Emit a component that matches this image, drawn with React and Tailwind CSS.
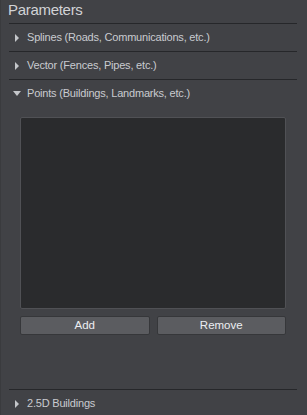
const Arrow = ({ open }) =>
  open ? (
    <svg width="8" height="5" viewBox="0 0 8 5" className="mr-[6px] ml-[4px]">
      <path d="M0 0 L8 0 L4 5 Z" fill="#c4c6ca" />
    </svg>
  ) : (
    <svg width="4" height="8" viewBox="0 0 4 8" className="mr-[8px] ml-[6px]">
      <path d="M0 0 L4 4 L0 8 Z" fill="#c4c6ca" />
    </svg>
  );

const Row = ({ label, open }) => (
  <div className="flex items-center h-[27px] text-[11px] tracking-[-0.2px] text-[#c9cbd0]">
    <Arrow open={open} />
    <span>{label}</span>
  </div>
);

const App = () => {
  return (
    <div
      className="w-[307px] h-[415px] bg-[#414246] border-l border-[#3a3b3e] flex flex-col overflow-hidden"
      style={{ fontFamily: '"Liberation Sans", Arial, sans-serif' }}
    >
      <div className="h-[23px] pl-[7px] text-[15px] tracking-[-0.3px] leading-[20px] text-[#d2d3d6]">Parameters</div>

      <div className="ml-[8px] mr-[10px] border-t border-[#26272a]">
        <Row label="Splines (Roads, Communications, etc.)" />
      </div>
      <div className="ml-[8px] mr-[10px] border-t border-[#26272a]">
        <Row label="Vector (Fences, Pipes, etc.)" />
      </div>
      <div className="ml-[8px] mr-[10px] border-t border-[#26272a] flex flex-col flex-1">
        <Row label="Points (Buildings, Landmarks, etc.)" open />
        <div className="pl-[11px] pr-[11px] pt-[10px]">
          <div className="h-[192px] bg-[#2a2b2d] border border-[#505155] rounded-[2px]" />
          <div className="flex gap-[7px] mt-[7px]">
            <button className="flex-1 h-[19px] bg-[#5b5c60] border border-[#36373a] rounded-[2px] text-[11.5px] text-[#eceef2]">
              Add
            </button>
            <button className="flex-1 h-[19px] bg-[#5b5c60] border border-[#36373a] rounded-[2px] text-[11.5px] text-[#eceef2]">
              Remove
            </button>
          </div>
        </div>
      </div>
      <div className="ml-[8px] mr-[10px] border-t border-[#26272a] h-[26px]">
        <Row label="2.5D Buildings" />
      </div>
    </div>
  );
};

export default App;
